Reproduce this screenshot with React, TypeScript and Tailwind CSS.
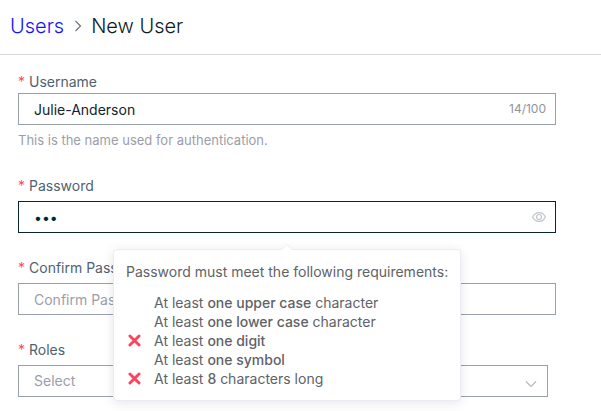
import { useState } from "react";
import type { ReactNode } from "react";

const box =
  "block h-8 w-full border border-[#98a0ab] bg-white px-[15px] text-sm text-[#12232c] outline-none placeholder:text-[#9b9ea8]";

function Field({
  id,
  label,
  compact = false,
  children,
}: {
  id: string;
  label: string;
  compact?: boolean;
  children: ReactNode;
}) {
  return (
    <div className="mb-5">
      <label
        htmlFor={id}
        className={`flex items-center text-sm text-[#4f6272] ${compact ? "h-[22px]" : "h-[30px]"}`}
      >
        <span className="mr-1 text-[#fa4b5f]">*</span>
        {label}
      </label>
      {children}
    </div>
  );
}

function CrossIcon() {
  return (
    <svg viewBox="0 0 12 12" className="h-[13px] w-[13px]" aria-hidden="true">
      <path d="M1.8 1.8 10.2 10.2M10.2 1.8 1.8 10.2" stroke="#fc4460" strokeWidth="2.7" strokeLinecap="round" />
    </svg>
  );
}

const rules = [
  { strong: "one upper case", rest: " character", failed: false },
  { strong: "one lower case", rest: " character", failed: false },
  { strong: "one digit", rest: "", failed: true },
  { strong: "one symbol", rest: "", failed: false },
  { strong: "8", rest: " characters long", failed: true },
];

function Requirements() {
  return (
    <div
      role="tooltip"
      className="absolute inset-x-0 top-12 z-10 mx-auto w-[348px] rounded border border-[#ebebf5] bg-white p-3 text-sm/[19px] text-[#606266] shadow-[0_2px_12px_rgba(0,0,0,0.1)]"
    >
      <svg viewBox="0 0 12 6" className="absolute -top-[6px] left-1/2 -ml-1.5 h-1.5 w-3" aria-hidden="true">
        <path d="M0 6 6 0l6 6z" fill="#fff" />
        <path d="M0 6 6 0.5l6 5.5" fill="none" stroke="#ebebf5" strokeWidth="1" />
      </svg>
      <p className="mb-3 whitespace-nowrap">Password must meet the following requirements:</p>
      <ul>
        {rules.map((rule) => (
          <li key={rule.strong} className="flex items-center">
            <span className="flex w-7 shrink-0 pl-0.5">{rule.failed && <CrossIcon />}</span>
            <span>
              At least <span className="font-medium">{rule.strong}</span>
              {rule.rest}
            </span>
          </li>
        ))}
      </ul>
    </div>
  );
}

export default function App() {
  const [username, setUsername] = useState("Julie-Anderson");
  const [password, setPassword] = useState("abc");
  const [visible, setVisible] = useState(false);

  return (
    <div className="overflow-hidden bg-white font-['Inter','Liberation_Sans',sans-serif]">
      <header className="border-b border-[#d5d7d9] px-2.5 pt-3 pb-3.5">
        <nav className="flex h-7 items-center text-xl font-light text-[#0c1c24]">
          <a href="#users" className="text-[#1414ff]">
            Users
          </a>
          <svg viewBox="0 0 8 12" className="mr-[9px] ml-2.5 h-3 w-2" aria-hidden="true">
            <path d="M1.5 1 6.5 6l-5 5" fill="none" stroke="#66717a" strokeWidth="1.1" />
          </svg>
          <h1>New User</h1>
        </nav>
      </header>
      <form className="pt-4 pr-[45px] pl-[18px]">
        <Field id="username" label="Username" compact>
          <div className="relative">
            <input
              id="username"
              className={box}
              value={username}
              maxLength={100}
              onChange={(e) => setUsername(e.target.value)}
            />
            <span className="absolute inset-y-0 right-[10px] flex items-center text-xs text-[#909399]">
              {username.length}/100
            </span>
          </div>
          <p className="mt-1 text-[13px]/[22px] text-[#9b9ea8]">This is the name used for authentication.</p>
        </Field>
        <Field id="password" label="Password">
          <div className="relative">
            <input
              id="password"
              type={visible ? "text" : "password"}
              className="block h-8 w-full border border-[#08242c] bg-white px-[15px] text-sm text-[#08242c] outline-none"
              value={password}
              onChange={(e) => setPassword(e.target.value)}
            />
            <button
              type="button"
              aria-label="Show password"
              onClick={() => setVisible(!visible)}
              className="absolute inset-y-0 right-[10px] flex items-center"
            >
              <svg
                viewBox="0 0 14 10"
                className="h-2.5 w-3.5"
                fill="none"
                stroke="#c0c4cc"
                strokeWidth="1.2"
                aria-hidden="true"
              >
                <path d="M0.6 5C2 2 4.2 0.6 7 0.6S12 2 13.4 5C12 8 9.8 9.4 7 9.4S2 8 0.6 5Z" />
                <circle cx="7" cy="5" r="2.5" />
              </svg>
            </button>
            <Requirements />
          </div>
        </Field>
        <Field id="confirm" label="Confirm Password">
          <input id="confirm" type="password" placeholder="Confirm Password" className={box} />
        </Field>
        <Field id="roles" label="Roles">
          <div className="relative mr-2">
            <select
              id="roles"
              defaultValue=""
              className="block h-8 w-full appearance-none border border-[#98a0ab] bg-white px-[15px] text-sm text-[#9b9ea8] outline-none"
            >
              <option value="">Select</option>
            </select>
            <svg
              viewBox="0 0 12 8"
              className="pointer-events-none absolute top-[15px] right-[11px] h-2 w-3"
              aria-hidden="true"
            >
              <path d="M1 1.5 6 6.5l5-5" fill="none" stroke="#b4b8c0" strokeWidth="1.2" />
            </svg>
          </div>
        </Field>
      </form>
    </div>
  );
}
